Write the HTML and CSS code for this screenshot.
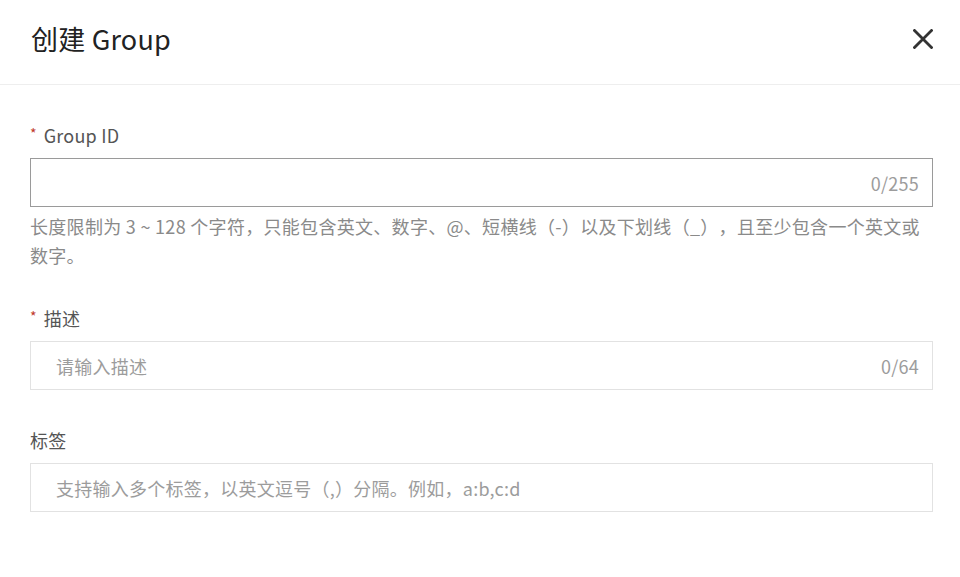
FILE: index.html
```html
<!DOCTYPE html>
<html lang="zh-CN">
<head>
<meta charset="utf-8">
<title>创建 Group</title>
<link rel="stylesheet" href="styles.css">
</head>
<body>
<div class="dialog">
  <header class="dialog-header">
    <h1 class="dialog-title">创建 Group</h1>
    <button class="close-btn" aria-label="关闭">
      <svg width="20" height="20" viewBox="0 0 20 20"><path d="M1.5 1.5 L18.5 18.5 M18.5 1.5 L1.5 18.5" stroke="#333" stroke-width="2.8" stroke-linecap="square" fill="none"/></svg>
    </button>
  </header>
  <form class="dialog-body">
    <div class="field">
      <label class="field-label"><span class="req">*</span>Group ID</label>
      <div class="input input-active">
        <span class="input-text"></span>
        <span class="counter">0/255</span>
      </div>
      <p class="help">长度限制为 3 ~ 128 个字符，只能包含英文、数字、@、短横线（-）以及下划线（_），且至少包含一个英文或数字。</p>
    </div>
    <div class="field field-2">
      <label class="field-label"><span class="req">*</span>描述</label>
      <div class="input">
        <span class="input-text placeholder">请输入描述</span>
        <span class="counter">0/64</span>
      </div>
    </div>
    <div class="field field-3">
      <label class="field-label">标签</label>
      <div class="input">
        <span class="input-text placeholder">支持输入多个标签，以英文逗号（,）分隔。例如，a:b,c:d</span>
      </div>
    </div>
  </form>
</div>
</body>
</html>
```
FILE: styles.css
```css
* { box-sizing: border-box; }
html, body {
  margin: 0;
  padding: 0;
  background: #fff;
}
body {
  font-family: "Noto Sans CJK SC", "Noto Sans", sans-serif;
  color: #333;
  text-spacing-trim: space-all;
}
.dialog {
  width: 960px;
}
.dialog-header {
  height: 85px;
  border-bottom: 1px solid #eeeeee;
  display: flex;
  align-items: center;
  justify-content: space-between;
  padding: 0 27px 6px 31px;
}
.dialog-title {
  margin: 0;
  font-size: 27px;
  font-weight: 400;
  color: #222;
  line-height: 36px;
  letter-spacing: 0.2px;
}
.close-btn {
  border: 0;
  background: none;
  padding: 0;
  width: 20px;
  height: 20px;
  display: flex;
  cursor: pointer;
}
.dialog-body {
  padding: 38px 27px 0 30px;
  margin: 0;
}
.field-label {
  display: flex;
  align-items: center;
  font-size: 18px;
  line-height: 24px;
  height: 24px;
  color: #555;
  margin-bottom: 11px;
  letter-spacing: 0.2px;
}
.req {
  color: #c0392b;
  font-size: 14px;
  margin-right: 7px;
  margin-top: -4px;
}
.input {
  height: 49px;
  border: 1px solid #e2e2e2;
  display: flex;
  align-items: center;
  padding: 0 13px 0 25px;
  font-size: 18px;
  letter-spacing: 0.25px;
}
.input-active {
  border-color: #9a9a9a;
}
.input-text {
  flex: 1;
  color: #333;
}
.placeholder {
  color: #9c9c9c;
}
.counter {
  color: #9c9c9c;
}
.help {
  margin: 5px 0 0;
  font-size: 18px;
  line-height: 29px;
  color: #8a8a8a;
  letter-spacing: 0.3px;
}
.field-2 {
  margin-top: 36px;
}
.field-3 {
  margin-top: 38px;
}
```
